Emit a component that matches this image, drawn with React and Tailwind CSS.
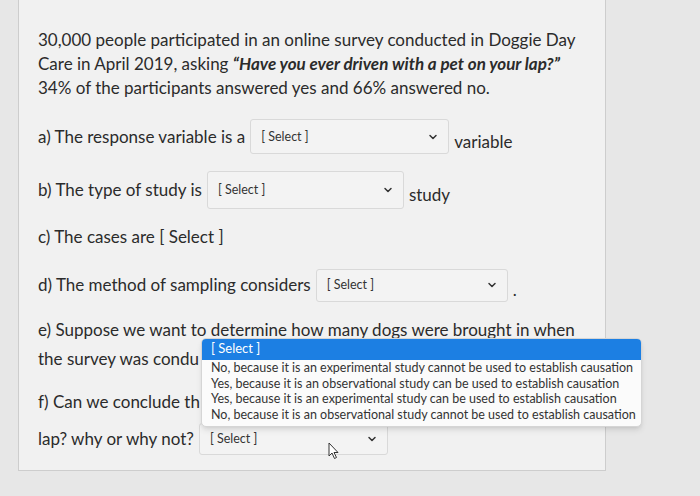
import React from "react";
import { ChevronDown } from "lucide-react";

const font = { fontFamily: "Lato, 'Open Sans', sans-serif" };

function Select({ width, height = 35 }) {
  return (
    <span
      className="inline-flex items-center justify-between rounded-[3px] border border-[#d9d9d9] bg-[#f3f3f3] pl-[10px] pr-[9px] align-middle"
      style={{ width, height }}
    >
      <span className="text-[12.5px] text-[#333]">[ Select ]</span>
      <ChevronDown size={12} strokeWidth={3} className="text-[#333]" />
    </span>
  );
}

const options = [
  "No, because it is an experimental study cannot be used to establish causation",
  "Yes, because it is an observational study can be used to establish causation",
  "Yes, because it is an experimental study can be used to establish causation",
  "No, because it is an observational study cannot be used to establish causation",
];

export default function App() {
  return (
    <div
      className="h-[496px] w-[700px] overflow-hidden bg-[#e7e7e7] pl-[18px] text-[#2b2b2b]"
      style={font}
    >
      <div className="relative h-[471px] w-[588px] border-b border-l border-r border-[#cdcdcd] bg-[#f1f1f1] pl-[19px] pt-[28px] text-[17px] leading-[24px]">
        <p>
          30,000 people participated in an online survey conducted in Doggie Day
          <br />
          Care in April 2019, asking{" "}
          <b className="italic font-bold">
            “Have you ever driven with a pet on your lap?”
          </b>
          <br />
          34% of the participants answered yes and 66% answered no.
        </p>

        <div className="mt-[19px] flex items-center gap-[5px]">
          <span>a) The response variable is a</span>
          <Select width={199} />
          <span className="mt-[10px]">variable</span>
        </div>

        <div className="mt-[17px] flex items-center gap-[5px]">
          <span>b) The type of study is</span>
          <Select width={197} height={38} />
          <span className="mt-[10px]">study</span>
        </div>

        <p className="mt-[16px]">c) The cases are [ Select ]</p>

        <div className="mt-[19px] flex items-center gap-[5px]">
          <span>d) The method of sampling considers</span>
          <Select width={192} height={33} />
          <span className="mt-[10px]">.</span>
        </div>

        <p className="mt-[16px]">
          e) Suppose we want to determine how many dogs were brought in when
        </p>
        <p className="mt-[5px]">the survey was condu</p>

        <p className="mt-[19px]">f) Can we conclude th</p>
        <div className="mt-[9px] flex items-center gap-[5px]">
          <span>lap? why or why not?</span>
          <Select width={189} height={32} />
        </div>

        <svg
          className="absolute left-[309px] top-[442px]"
          width="12"
          height="18"
          viewBox="0 0 12 18"
        >
          <path
            d="M1 1 L1 14 L4 11 L6.5 16.5 L8.5 15.5 L6 10.5 L10 10.5 Z"
            fill="#fff"
            stroke="#333"
            strokeWidth="1"
            strokeLinejoin="round"
          />
        </svg>

        <div className="absolute left-[182px] top-[338px] w-[441px] overflow-hidden rounded-[5px] border border-[#d5d5d5] bg-[#fbfbfb] pb-[4px] shadow-md">
          <div className="h-[21px] bg-[#1c7fe3] pl-[9px] text-[13px] leading-[18px] text-white">
            [ Select ]
          </div>
          {options.map((o) => (
            <div
              key={o}
              className="whitespace-nowrap pl-[9px] text-[12.5px] leading-[15.5px] text-[#333]"
            >
              {o}
            </div>
          ))}
        </div>
      </div>
    </div>
  );
}
